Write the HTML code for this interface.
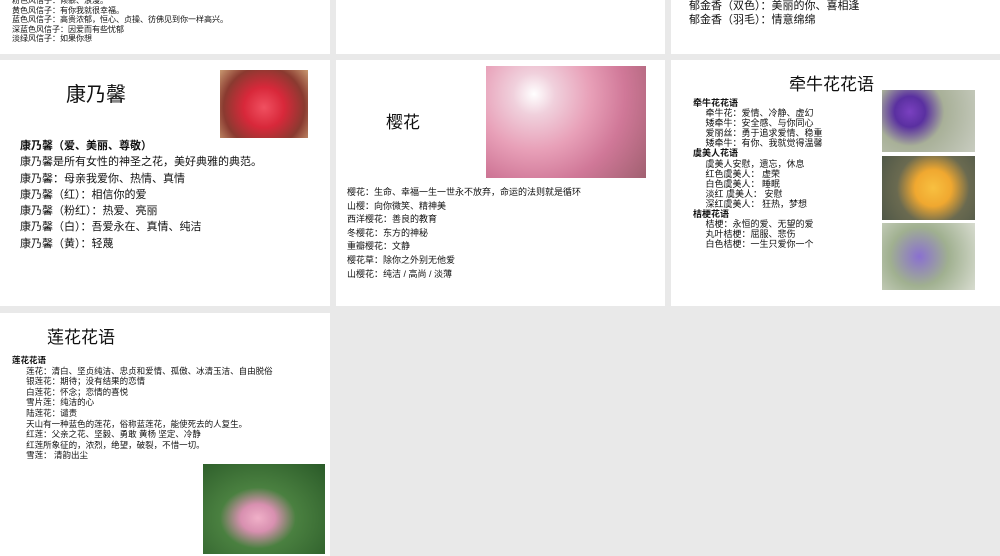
<!DOCTYPE html>
<html><head><meta charset="utf-8"><style>
*{margin:0;padding:0;box-sizing:border-box}
body{width:1000px;height:556px;background:#e9e9e9;position:relative;overflow:hidden;font-family:"Liberation Sans","Noto Sans CJK SC",sans-serif;color:#111}
.p{position:absolute;background:#fff}
.t{position:absolute;white-space:nowrap}
.s{font-size:8px;line-height:9.6px}
.m{font-size:11px;line-height:16px}
.img{position:absolute}
</style></head><body>
<div class="p" style="left:0;top:0;width:330px;height:54px">
<div class="t s" style="left:12px;top:-4px">粉色风信子：倾慕、浪漫。<br>黄色风信子：有你我就很幸福。<br>蓝色风信子：高贵浓郁，恒心、贞操、彷佛见到你一样高兴。<br>深蓝色风信子：因爱而有些忧郁<br>淡绿风信子：如果你想</div>
</div>
<div class="p" style="left:336px;top:0;width:329px;height:54px"></div>
<div class="p" style="left:671px;top:0;width:329px;height:54px">
<div class="t m" style="left:18px;top:-1px;line-height:14px">郁金香（双色）：美丽的你、喜相逢<br>郁金香（羽毛）：情意绵绵</div>
</div>

<div class="p" style="left:0;top:60px;width:330px;height:246px">
<div class="t" style="left:66px;top:18px;font-size:20px">康乃馨</div>
<div class="img" style="left:220px;top:10px;width:88px;height:68px;background:radial-gradient(circle at 50% 55%,#f05060 0,#d8283a 35%,#8a3a30 70%,#c89870 100%)"></div>
<div class="t m" style="left:20px;top:78px;line-height:16.3px"><b>康乃馨（爱、美丽、尊敬）</b><br>康乃馨是所有女性的神圣之花，美好典雅的典范。<br>康乃馨：母亲我爱你、热情、真情<br>康乃馨（红）：相信你的爱<br>康乃馨（粉红）：热爱、亮丽<br>康乃馨（白）：吾爱永在、真情、纯洁<br>康乃馨（黄）：轻蔑</div>
</div>

<div class="p" style="left:336px;top:60px;width:329px;height:246px">
<div class="t" style="left:50px;top:48px;font-size:17px">樱花</div>
<div class="img" style="left:150px;top:6px;width:160px;height:112px;background:radial-gradient(circle at 30% 25%,#fff 0,#f0d0dc 15%,#e8a0b8 40%,#d07898 65%,#a06070 100%)"></div>
<div class="t s" style="left:11px;top:126px;font-size:9px;line-height:13.6px">樱花：生命、幸福一生一世永不放弃，命运的法则就是循环<br>山樱：向你微笑、精神美<br>西洋樱花：善良的教育<br>冬樱花：东方的神秘<br>重瓣樱花：文静<br>樱花草：除你之外别无他爱<br>山樱花：纯洁 / 高尚 / 淡薄</div>
</div>

<div class="p" style="left:671px;top:60px;width:329px;height:246px">
<div class="t" style="left:118px;top:10px;font-size:17px">牵牛花花语</div>
<div class="img" style="left:211px;top:30px;width:93px;height:62px;background:radial-gradient(circle at 30% 35%,#7a40c0 0,#5a30a0 20%,#a8b098 45%,#c8ccc0 100%)"></div>
<div class="img" style="left:211px;top:96px;width:93px;height:64px;background:radial-gradient(circle at 55% 50%,#f8c040 0,#f0a830 30%,#6a6a50 60%,#505848 100%)"></div>
<div class="img" style="left:211px;top:163px;width:93px;height:67px;background:radial-gradient(circle at 40% 50%,#8a70d0 0,#a0b090 45%,#d8dcd0 100%)"></div>
<div class="t s" style="left:22px;top:38px;font-size:9px;line-height:10.1px"><b>牵牛花花语</b><br>&nbsp;&nbsp;&nbsp;&nbsp;&nbsp;牵牛花：爱情、冷静、虚幻<br>&nbsp;&nbsp;&nbsp;&nbsp;&nbsp;矮牵牛：安全感、与你同心<br>&nbsp;&nbsp;&nbsp;&nbsp;&nbsp;爱丽丝：勇于追求爱情、稳重<br>&nbsp;&nbsp;&nbsp;&nbsp;&nbsp;矮牵牛：有你、我就觉得温馨<br><b>虞美人花语</b><br>&nbsp;&nbsp;&nbsp;&nbsp;&nbsp;虞美人安慰，遗忘，休息<br>&nbsp;&nbsp;&nbsp;&nbsp;&nbsp;红色虞美人：&nbsp;虚荣<br>&nbsp;&nbsp;&nbsp;&nbsp;&nbsp;白色虞美人：&nbsp;睡眠<br>&nbsp;&nbsp;&nbsp;&nbsp;&nbsp;淡红 虞美人：&nbsp;安慰<br>&nbsp;&nbsp;&nbsp;&nbsp;&nbsp;深红虞美人：&nbsp;狂热，梦想<br><b>桔梗花语</b><br>&nbsp;&nbsp;&nbsp;&nbsp;&nbsp;桔梗：永恒的爱、无望的爱<br>&nbsp;&nbsp;&nbsp;&nbsp;&nbsp;丸叶桔梗：屈服、悲伤<br>&nbsp;&nbsp;&nbsp;&nbsp;&nbsp;白色桔梗：一生只爱你一个</div>
</div>

<div class="p" style="left:0;top:313px;width:330px;height:243px">
<div class="t" style="left:47px;top:10px;font-size:17px">莲花花语</div>
<div class="t s" style="left:12px;top:42px;font-size:8.5px;line-height:10.6px"><b>莲花花语</b><br>&nbsp;&nbsp;&nbsp;&nbsp;&nbsp;&nbsp;莲花：清白、坚贞纯洁、忠贞和爱情、孤傲、冰清玉洁、自由脱俗<br>&nbsp;&nbsp;&nbsp;&nbsp;&nbsp;&nbsp;银莲花：期待；没有结果的恋情<br>&nbsp;&nbsp;&nbsp;&nbsp;&nbsp;&nbsp;白莲花：怀念；恋情的喜悦<br>&nbsp;&nbsp;&nbsp;&nbsp;&nbsp;&nbsp;雪片莲：纯洁的心<br>&nbsp;&nbsp;&nbsp;&nbsp;&nbsp;&nbsp;陆莲花：谴责<br>&nbsp;&nbsp;&nbsp;&nbsp;&nbsp;&nbsp;天山有一种蓝色的莲花，俗称蓝莲花，能使死去的人复生。<br>&nbsp;&nbsp;&nbsp;&nbsp;&nbsp;&nbsp;红莲：父亲之花、坚毅、勇敢 黄杨 坚定、冷静<br>&nbsp;&nbsp;&nbsp;&nbsp;&nbsp;&nbsp;红莲所象征的，浓烈，绝望，破裂，不惜一切。<br>&nbsp;&nbsp;&nbsp;&nbsp;&nbsp;&nbsp;雪莲：&nbsp;清韵出尘</div>
<div class="img" style="left:203px;top:151px;width:122px;height:90px;background:radial-gradient(ellipse at 45% 60%,#f0b0c8 0,#d890b0 18%,#4a8040 40%,#2a5a28 100%)"></div>
</div>
</body></html>
